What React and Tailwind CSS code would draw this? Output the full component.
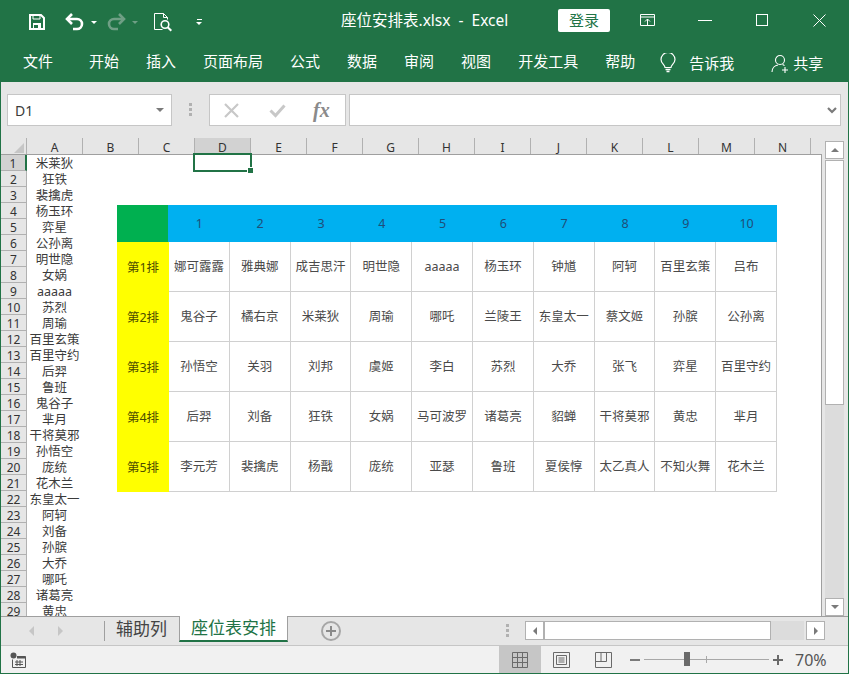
import React from 'react';

const TABS = ['开始', '插入', '页面布局', '公式', '数据', '审阅', '视图', '开发工具', '帮助'];
const COLS = ['A', 'B', 'C', 'D', 'E', 'F', 'G', 'H', 'I', 'J', 'K', 'L', 'M', 'N'];
const NAMES = ['米莱狄', '狂铁', '裴擒虎', '杨玉环', '弈星', '公孙离', '明世隐', '女娲', 'aaaaa', '苏烈', '周瑜', '百里玄策', '百里守约', '后羿', '鲁班', '鬼谷子', '芈月', '干将莫邪', '孙悟空', '庞统', '花木兰', '东皇太一', '阿轲', '刘备', '孙膑', '大乔', '哪吒', '诸葛亮', '黄忠'];
const SEATS = [
  ['娜可露露', '雅典娜', '成吉思汗', '明世隐', 'aaaaa', '杨玉环', '钟馗', '阿轲', '百里玄策', '吕布'],
  ['鬼谷子', '橘右京', '米莱狄', '周瑜', '哪吒', '兰陵王', '东皇太一', '蔡文姬', '孙膑', '公孙离'],
  ['孙悟空', '关羽', '刘邦', '虞姬', '李白', '苏烈', '大乔', '张飞', '弈星', '百里守约'],
  ['后羿', '刘备', '狂铁', '女娲', '马可波罗', '诸葛亮', '貂蝉', '干将莫邪', '黄忠', '芈月'],
  ['李元芳', '裴擒虎', '杨戬', '庞统', '亚瑟', '鲁班', '夏侯惇', '太乙真人', '不知火舞', '花木兰'],
];

const Dots = () => (
  <div className="flex flex-col gap-[2px]">
    <div className="w-[3px] h-[3px] bg-[#b1b1b1]"></div>
    <div className="w-[3px] h-[3px] bg-[#b1b1b1]"></div>
    <div className="w-[3px] h-[3px] bg-[#b1b1b1]"></div>
  </div>
);

const TitleBar = () => (
  <div className="h-[44px] flex items-center text-white shrink-0">
    {/* quick access */}
    <svg className="ml-[28px] shrink-0" width="16" height="16" viewBox="0 0 16 16" fill="none" stroke="white" strokeWidth="2">
      <path d="M1 1h11l3 3v11H1z" />
      <path d="M4 1v4h7V1" strokeWidth="1" />
      <path d="M4 9h8v6H4z" fill="white" stroke="none" />
      <path d="M5 11h4v3H5z" fill="#217346" stroke="none" />
    </svg>
    <svg className="ml-[20px] shrink-0" width="20" height="18" viewBox="0 0 20 18" fill="none" stroke="white" strokeWidth="2.6">
      <path d="M2 6h10a5 5 0 0 1 0 10H8" />
      <path d="M7 1L2 6l5 5" />
    </svg>
    <div className="ml-[6px] w-0 h-0 border-x-[3px] border-t-[3px] border-x-transparent border-t-white"></div>
    <svg className="ml-[9px] shrink-0" width="20" height="18" viewBox="0 0 20 18" fill="none" stroke="#6f9f85" strokeWidth="2.6">
      <path d="M18 6H8a5 5 0 0 0 0 10h4" />
      <path d="M13 1l5 5-5 5" />
    </svg>
    <div className="ml-[6px] w-0 h-0 border-x-[3px] border-t-[3px] border-x-transparent border-t-[#6f9f85]"></div>
    <svg className="ml-[16px] shrink-0" width="18" height="20" viewBox="0 0 18 20" fill="none" stroke="white" strokeWidth="1">
      <path d="M.5 1.500h9l4 4v2M9.500 1.500v4h4M.5 1.500v16h8" />
      <circle cx="11" cy="12.500" r="3.800" strokeWidth="1.600" />
      <path d="M13.700 15.200l3.600 3.600" strokeWidth="2" />
    </svg>
    <div className="ml-[24px] flex flex-col items-center gap-[2px]">
      <div className="w-[5px] h-[1px] bg-white"></div>
      <div className="w-0 h-0 border-x-[3px] border-t-[3px] border-x-transparent border-t-white"></div>
    </div>
    <div className="ml-[139px] mb-[2px] w-[165px] text-[15.500px] whitespace-pre shrink-0">座位安排表.xlsx  -  Excel</div>
    <div className="ml-[52px] mb-[4px] w-[52px] h-[23px] bg-white rounded-[2px] text-[#217346] text-[15px] flex items-center justify-center">登录</div>
    <svg className="ml-[30px] mb-[4px] shrink-0" width="15" height="13" viewBox="0 0 15 13" fill="none" stroke="white" strokeWidth="1">
      <path d="M.5.5h14v11H.5zM.5 3h14M7.500 11V5M5 7.500l2.500-2.500L10 7.500" />
    </svg>
    <div className="ml-[43px] mb-[4px] w-[14px] h-[1px] bg-white"></div>
    <div className="ml-[44px] mb-[4px] w-[12px] h-[12px] border border-white"></div>
    <svg className="ml-[45px] mb-[4px] shrink-0" width="13" height="13" viewBox="0 0 13 13" stroke="white" strokeWidth="1">
      <path d="M.5.5l12 12M12.500.5l-12 12" />
    </svg>
  </div>
);

const RibbonTabs = () => (
  <div className="h-[38px] flex items-start text-white text-[15px] leading-[22px] pt-[6px] pl-[22px] shrink-0">
    <div className="mr-[36px]">文件</div>
    <div className="flex gap-[27px]">
      {TABS.map((t) => (
        <div key={t}>{t}</div>
      ))}
    </div>
    <svg className="ml-[25px] mt-[3px] shrink-0" width="16" height="20" viewBox="0 0 16 20" fill="none" stroke="white" strokeWidth="1.200">
      <path d="M5 14.500c0-2.500-4-4-4-8a7 7 0 0 1 14 0c0 4-4 5.500-4 8z" />
      <path d="M5.500 16.500h5M6.500 18.500h3" strokeWidth="1.600" />
    </svg>
    <div className="ml-[13px] mt-[2px]">告诉我</div>
    <svg className="ml-[37px] mt-[4px] shrink-0" width="19" height="20" viewBox="0 0 19 20" fill="none" stroke="white" strokeWidth="1.100">
      <circle cx="9" cy="6" r="4.500" />
      <path d="M1 18c0-4 3-6.500 6-7M11.500 10.500c.8.300 1.500.700 2 1.200M14 13v6M11 16h6" />
    </svg>
    <div className="ml-[3px] mt-[2px]">共享</div>
  </div>
);

const FormulaBar = () => (
  <div className="h-[56px] bg-[#e6e6e6] flex items-start pt-[12px] pl-[6px] shrink-0">
    <div className="w-[165px] h-[32px] bg-white border border-[#c6c6c6] flex items-center justify-between pl-[7px] pr-[7px] text-[14px] text-[#3b3b3b]">
      <span>D1</span>
      <div className="w-0 h-0 border-x-[4px] border-t-[4px] border-x-transparent border-t-[#7a7a7a]"></div>
    </div>
    <div className="ml-[17px] mt-[9px]"><Dots /></div>
    <div className="ml-[17px] w-[137px] h-[32px] bg-white border border-[#c6c6c6] flex items-center shrink-0">
      <svg className="ml-[14px]" width="15" height="15" viewBox="0 0 15 15" stroke="#c8c8c8" strokeWidth="2.200">
        <path d="M1 1l13 13M14 1L1 14" />
      </svg>
      <svg className="ml-[30px]" width="17" height="15" viewBox="0 0 17 15" fill="none" stroke="#c8c8c8" strokeWidth="3">
        <path d="M1.500 7.500l5 5 9-10" />
      </svg>
      <span className="ml-[27px] font-['Liberation_Serif',serif] italic font-bold text-[20px] leading-none text-[#8a8a8a]">fx</span>
    </div>
    <div className="ml-[3px] w-[492px] h-[32px] bg-white border border-[#c6c6c6] flex items-center justify-end pr-[3px] shrink-0">
      <svg width="10" height="7" viewBox="0 0 10 7" fill="none" stroke="#7a7a7a" strokeWidth="2.200">
        <path d="M1 1l4 4 4-4" />
      </svg>
    </div>
  </div>
);

const ColumnHeaders = () => (
  <div className="h-[17px] flex bg-[#e6e6e6] border-b border-[#9f9f9f] shrink-0">
    <div className="w-[26px] relative border-r border-[#b1b1b1] shrink-0">
      <div className="w-0 h-0 ml-[13px] mt-[5px] border-l-[10px] border-b-[10px] border-l-transparent border-b-[#c6c6c6]"></div>
    </div>
    {COLS.map((c) => (
      <div
        key={c}
        className={
          'w-[56px] shrink-0 text-center text-[12px] leading-[20px] text-[#333] border-r border-[#b1b1b1] ' +
          (c === 'D' ? 'bg-[#d2d2d2]' : '')
        }
      >
        {c}
      </div>
    ))}
  </div>
);

const RowHeaders = () => (
  <div className="w-[26px] shrink-0 flex flex-col bg-[#e6e6e6] overflow-hidden">
    {NAMES.map((_, i) => (
      <div
        key={i}
        className={
          'h-[16px] shrink-0 text-center text-[12px] leading-[17px] text-[#333] border-b border-[#b1b1b1] border-r ' +
          (i === 0 ? 'bg-[#d2d2d2] border-r-2 border-r-[#217346]' : 'border-r-[#b1b1b1]')
        }
      >
        {i + 1}
      </div>
    ))}
  </div>
);

const SeatTable = () => (
  <div className="w-[660px] text-[12.500px] text-[#4a4a4a]">
    <div className="h-[37px] flex">
      <div className="w-[51px] bg-[#00b050]"></div>
      <div className="flex-1 flex bg-[#00b0f0] pl-[1px] text-[#1f4e79]">
        {SEATS[0].map((_, i) => (
          <div key={i} className="flex-1 flex items-center justify-center pt-[2px]">{i + 1}</div>
        ))}
      </div>
    </div>
    {SEATS.map((row, r) => (
      <div key={r} className="h-[50px] flex">
        <div className="w-[52px] bg-[#ffff00] flex items-center justify-center pt-[2px] text-[#4d4d00]">第{r + 1}排</div>
        <div className="flex-1 flex border-b border-[#d0d0d0]">
          {row.map((name) => (
            <div key={name} className="flex-1 flex items-center justify-center pt-[2px] border-r border-[#d0d0d0] whitespace-nowrap">{name}</div>
          ))}
        </div>
      </div>
    ))}
  </div>
);

const Sheet = () => (
  <div className="flex-1 flex min-h-0">
    <RowHeaders />
    <div className="w-[57px] shrink-0 flex flex-col items-center pr-[2px] text-[12.500px] text-[#3b3b3b] overflow-hidden">
      {NAMES.map((n) => (
        <div key={n} className="h-[16px] shrink-0 leading-[18px] whitespace-nowrap">{n}</div>
      ))}
    </div>
    <div className="flex-1 relative pl-[33px] pt-[50px] border-r border-[#9f9f9f]">
      <SeatTable />
      {/* selected cell */}
      <div className="absolute left-[109px] top-[-2px] w-[59px] h-[19px] border-2 border-[#217346] z-10">
        <div className="absolute right-[-3px] bottom-[-3px] w-[6px] h-[6px] bg-[#217346] border-l border-t border-white"></div>
      </div>
    </div>
  </div>
);

const ScrollV = () => (
  <div className="w-[26px] shrink-0 bg-[#e6e6e6] flex flex-col pl-[3px] pt-[3px]">
    <div className="w-[19px] h-[18px] bg-white border border-[#b1b1b1] flex items-center justify-center shrink-0">
      <div className="w-0 h-0 border-x-[4px] border-b-[4px] border-x-transparent border-b-[#7a7a7a]"></div>
    </div>
    <div className="w-[19px] h-[245px] mt-[1px] bg-white border border-[#b1b1b1] shrink-0"></div>
    <div className="w-[19px] flex-1 bg-[#dcdcdc]"></div>
    <div className="w-[19px] h-[18px] bg-white border border-[#b1b1b1] flex items-center justify-center shrink-0">
      <div className="w-0 h-0 border-x-[4px] border-t-[4px] border-x-transparent border-t-[#7a7a7a]"></div>
    </div>
  </div>
);

const SheetTabs = () => (
  <div className="h-[29px] bg-[#e6e6e6] border-t border-[#9f9f9f] flex items-start shrink-0 relative">
    <div className="ml-[28px] mt-[9px] w-0 h-0 border-y-[5px] border-r-[5px] border-y-transparent border-r-[#c6c6c6]"></div>
    <div className="ml-[24px] mt-[9px] w-0 h-0 border-y-[5px] border-l-[5px] border-y-transparent border-l-[#c6c6c6]"></div>
    <div className="ml-[41px] mt-[4px] w-[1px] h-[20px] bg-[#9f9f9f]"></div>
    <div className="ml-[11px] w-[63px] text-[17px] leading-[24px] text-[#444]">辅助列</div>
    <div className="w-[109px] h-[26px] -mt-[1px] bg-white border-x border-[#9f9f9f] border-b-2 border-b-[#217346] text-[17px] leading-[24px] text-[#217346] text-center">座位表安排</div>
    <div className="ml-[33px] mt-[4px] w-[20px] h-[20px] rounded-full border-2 border-[#a6a6a6] flex items-center justify-center">
      <svg width="10" height="10" viewBox="0 0 10 10" stroke="#8a8a8a" strokeWidth="2">
        <path d="M5 0v10M0 5h10" />
      </svg>
    </div>
    <div className="ml-[165px] mt-[7px]"><Dots /></div>
    <div className="ml-[16px] mt-[4px] w-[19px] h-[19px] bg-white border border-[#b1b1b1] flex items-center justify-center shrink-0">
      <div className="w-0 h-0 border-y-[4px] border-r-[4px] border-y-transparent border-r-[#7a7a7a]"></div>
    </div>
    <div className="mt-[4px] w-[227px] h-[19px] bg-white border border-[#b1b1b1] shrink-0"></div>
    <div className="mt-[4px] w-[33px] h-[19px] bg-[#dcdcdc] shrink-0"></div>
    <div className="ml-[2px] mt-[4px] w-[19px] h-[19px] bg-white border border-[#b1b1b1] flex items-center justify-center shrink-0">
      <div className="w-0 h-0 border-y-[4px] border-l-[4px] border-y-transparent border-l-[#7a7a7a]"></div>
    </div>
  </div>
);

const StatusBar = () => (
  <div className="h-[28px] bg-[#f1f1f1] border-t border-[#c6c6c6] flex items-center shrink-0">
    <svg className="ml-[9px] shrink-0" width="16" height="16" viewBox="0 0 16 16" fill="none" stroke="#555" strokeWidth="1">
      <circle cx="3.500" cy="3.500" r="3" fill="#555" stroke="none" />
      <path d="M2.500 7.500v8h13v-11H7M5 10h8M5 12.500h8M7 8v6M10 8v6" />
      <path d="M7 4.500h8.500v2H7z" fill="#555" stroke="none" />
    </svg>
    <div className="ml-[473px] w-[42px] h-[27px] bg-[#c6c6c6] flex items-center justify-center shrink-0">
      <svg width="16" height="16" viewBox="0 0 16 16" fill="none" stroke="#6a6a6a" strokeWidth="1">
        <path d="M.5.5h15v15H.5zM.5 5.500h15M.5 10.500h15M5.500.5v15M10.500.5v15" />
      </svg>
    </div>
    <svg className="ml-[12px] shrink-0" width="17" height="16" viewBox="0 0 17 16" fill="none" stroke="#6a6a6a" strokeWidth="1">
      <path d="M.5.5h16v15H.5zM3.500 3.500h10v9h-10zM5.500 6h6M5.500 8h6M5.500 10h6" />
    </svg>
    <svg className="ml-[25px] shrink-0" width="17" height="16" viewBox="0 0 17 16" fill="none" stroke="#6a6a6a" strokeWidth="1">
      <path d="M.5.5h16v15H.5zM.5 9.500h11V.5M6 .5v9" />
    </svg>
    <div className="ml-[18px] w-[10px] h-[2px] bg-[#7a7a7a]"></div>
    <div className="ml-[4px] w-[125px] h-[1px] bg-[#a8a8a8] relative">
      <div className="absolute left-[40px] top-[-7px] w-[6px] h-[14px] bg-[#6a6a6a]"></div>
      <div className="absolute left-[62px] top-[-3px] w-[1px] h-[7px] bg-[#a8a8a8]"></div>
    </div>
    <svg className="ml-[4px] shrink-0" width="10" height="10" viewBox="0 0 10 10" stroke="#6a6a6a" strokeWidth="2">
      <path d="M5 0v10M0 5h10" />
    </svg>
    <div className="ml-[12px] text-[16px] text-[#555]">70%</div>
  </div>
);

export default function App() {
  return (
    <div className="w-[849px] h-[674px] overflow-hidden flex flex-col bg-[#217346] border-x border-b border-[#217346] font-['Noto_Sans','Noto_Sans_CJK_SC',sans-serif]">
      <TitleBar />
      <RibbonTabs />
      <FormulaBar />
      <div className="flex-1 flex min-h-0">
        <div className="flex-1 flex flex-col min-w-0 bg-white">
          <ColumnHeaders />
          <Sheet />
        </div>
        <ScrollV />
      </div>
      <SheetTabs />
      <StatusBar />
    </div>
  );
}
